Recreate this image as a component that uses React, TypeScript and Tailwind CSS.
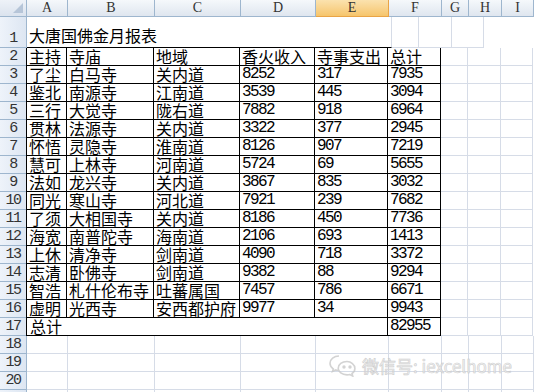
import React from "react";

const W = ["w-[41px]", "w-[87px]", "w-[86px]", "w-[75px]", "w-[73px]", "w-[53px]", "w-[27px]", "w-[33px]", "w-[32px]"];
const LETTERS = ["A", "B", "C", "D", "E", "F", "G", "H", "I"];

const ROWS: string[][] = [
  ["主持", "寺庙", "地域", "香火收入", "寺事支出", "总计"],
  ["了尘", "白马寺", "关内道", "8252", "317", "7935"],
  ["鉴北", "南源寺", "江南道", "3539", "445", "3094"],
  ["三行", "大觉寺", "陇右道", "7882", "918", "6964"],
  ["贯林", "法源寺", "关内道", "3322", "377", "2945"],
  ["怀悟", "灵隐寺", "淮南道", "8126", "907", "7219"],
  ["慧可", "上林寺", "河南道", "5724", "69", "5655"],
  ["法如", "龙兴寺", "关内道", "3867", "835", "3032"],
  ["同光", "寒山寺", "河北道", "7921", "239", "7682"],
  ["了须", "大相国寺", "关内道", "8186", "450", "7736"],
  ["海宽", "南普陀寺", "海南道", "2106", "693", "1413"],
  ["上休", "清净寺", "剑南道", "4090", "718", "3372"],
  ["志清", "卧佛寺", "剑南道", "9382", "88", "9294"],
  ["智浩", "札什伦布寺", "吐蕃属国", "7457", "786", "6671"],
  ["虚明", "光西寺", "安西都护府", "9977", "34", "9943"],
];

const cjk = "font-['Noto_Sans_CJK_SC',sans-serif] text-[16px] leading-[17px]";
const num = "font-['Liberation_Mono',monospace] text-[16px] leading-[17px] tracking-[-1.6px]";

function RowHead({ n, h = "h-[18px]" }: { n?: number; h?: string }) {
  return (
    <div
      className={`${h} w-[27px] shrink-0 flex items-end justify-center overflow-hidden border-b border-r border-[#9eb6ce] bg-gradient-to-r from-[#eef3fa] to-[#dde6f2] font-['Liberation_Mono',monospace] text-[15px] tracking-[-1.5px] leading-[17px] text-[#333]`}
    >
      {n !== undefined && <span className="block h-[17px]">{n}</span>}
    </div>
  );
}

function Txt({ v }: { v: string }) {
  const isNum = /^\d+$/.test(v);
  return <span className={`block h-[17px] pl-[2px] whitespace-nowrap ${isNum ? num : cjk}`}>{v}</span>;
}

function Grid({ from }: { from: number }) {
  return (
    <>
      {W.slice(from).map((w, i) => (
        <div key={i} className={`${w} h-full shrink-0 border-b border-r border-[#d6dce7]`} />
      ))}
    </>
  );
}

export default function App() {
  return (
    <div className="relative w-[534px] h-[392px] overflow-hidden bg-white text-black">
      {/* column headers */}
      <div className="flex h-[17px]">
        <div className="w-[27px] shrink-0 relative border-b border-r border-[#9eb6ce] bg-gradient-to-b from-[#eef2f8] to-[#dbe3ee]">
          <div className="absolute right-[3px] bottom-[3px] w-0 h-0 border-l-[10px] border-l-transparent border-b-[10px] border-b-[#b6c5d8]" />
        </div>
        {LETTERS.map((l, i) => (
          <div
            key={l}
            className={`${W[i]} shrink-0 flex items-center justify-center border-b border-r font-['Liberation_Serif',serif] text-[14px] leading-none text-[#333] ${
              i === 4
                ? "bg-gradient-to-b from-[#fbe2ae] to-[#f6c56b] border-[#e9a446]"
                : "bg-gradient-to-b from-[#f5f8fb] to-[#dfe6ef] border-[#9eb6ce]"
            }`}
          >
            {l}
          </div>
        ))}
      </div>

      {/* row 1: title */}
      <div className="flex h-[31px]">
        <RowHead n={1} h="h-[31px]" />
        <div className="w-[365px] shrink-0 flex items-end pb-[3px] border-b border-black border-r-[#d6dce7] border-r">
          <Txt v="大唐国佛金月报表" />
        </div>
        <Grid from={6} />
      </div>

      {/* rows 2-16 */}
      {ROWS.map((r, ri) => (
        <div key={ri} className="flex h-[18px]">
          <RowHead n={ri + 2} />
          {r.map((v, ci) => (
            <div
              key={ci}
              className={`${W[ci]} shrink-0 flex items-center border-b border-r border-black ${ci === 0 ? "-ml-px border-l" : ""}`}
            >
              <Txt v={v} />
            </div>
          ))}
          <Grid from={6} />
        </div>
      ))}

      {/* row 17 */}
      <div className="flex h-[18px]">
        <RowHead n={17} />
        <div className="w-[362px] -ml-px pl-px shrink-0 flex items-center border-b border-r border-l border-black">
          <Txt v="总计" />
        </div>
        <div className="w-[53px] shrink-0 flex items-center border-b border-r border-black">
          <Txt v="82955" />
        </div>
        <Grid from={6} />
      </div>

      {/* rows 18-21 */}
      {[18, 19, 20].map((n) => (
        <div key={n} className="flex h-[18px]">
          <RowHead n={n} />
          <Grid from={0} />
        </div>
      ))}
      <div className="flex h-[18px]">
        <RowHead />
        <Grid from={0} />
      </div>

      {/* watermark */}
      <div className="absolute left-[328px] top-[353px] flex items-center gap-[4px] opacity-80">
        <svg width="30" height="24" viewBox="0 0 30 24" fill="none" stroke="#c9c9c9" strokeWidth="1.6">
          <path d="M11 3C6 3 2 6.2 2 10.2c0 2.3 1.3 4.3 3.3 5.6L4.5 18.5l3.2-1.6c1 .3 2.1.4 3.3.4" />
          <path d="M19 8.5c-5 0-8.8 3-8.8 6.7s3.8 6.7 8.8 6.7c1 0 2-.1 2.9-.4l2.8 1.5-.7-2.5c1.8-1.2 2.9-3 2.9-5.1 0-3.8-3.9-6.9-7.9-6.9z" />
          <circle cx="16" cy="14" r="0.9" fill="#c9c9c9" />
          <circle cx="22" cy="14" r="0.9" fill="#c9c9c9" />
        </svg>
        <span className="font-['Noto_Sans_CJK_SC',sans-serif] text-[17px] leading-none text-[#f4f4f4] [-webkit-text-stroke:0.6px_#c2c2c2] whitespace-nowrap">
          微信号: iexcelhome
        </span>
      </div>
    </div>
  );
}
